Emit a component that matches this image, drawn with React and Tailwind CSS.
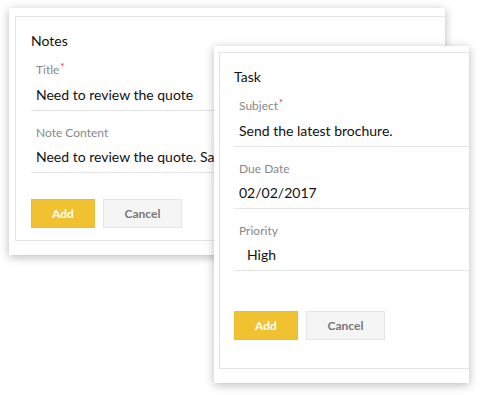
import React from "react";

function Field({ label, value, required, first, valueClass = "pl-[5px]" }) {
  return (
    <div
      className={`border-b border-[#e4e4e4] pb-[5px] ${first ? "mt-[11px]" : "mt-[14px]"}`}
    >
      <div className="pl-[5px] text-[12px] leading-[16px] text-[#888]">
        {label}
        {required && (
          <span className="relative -top-[4px] ml-[1px] text-[9px] text-[#e02020]">*</span>
        )}
      </div>
      <div
        className={`mt-[6px] overflow-hidden whitespace-nowrap text-[14px] leading-[20px] text-[#111] ${valueClass}`}
      >
        {value}
      </div>
    </div>
  );
}

function Buttons({ className }) {
  return (
    <div className={`flex gap-[8px] ${className}`}>
      <button className="h-[29px] w-[64px] border border-[#ecbd2a] bg-[#f0c232] text-[12px] font-bold text-white">
        Add
      </button>
      <button className="h-[29px] w-[79px] border border-[#e4e4e4] bg-[#f5f5f5] text-[12px] font-bold text-[#777]">
        Cancel
      </button>
    </div>
  );
}

function Card({ title, children, className, innerClass }) {
  return (
    <div
      className={`absolute bg-white shadow-[0_2px_9px_rgba(0,0,0,0.28)] ${className}`}
    >
      <div className={`h-full border-y border-l border-[#e4e4e4] ${innerClass}`}>
        <h2 className="pt-[14px] text-[14px] leading-[20px] text-[#111]">{title}</h2>
        {children}
      </div>
    </div>
  );
}

export default function App() {
  return (
    <div
      className="relative h-[395px] w-[482px] overflow-hidden bg-white"
      style={{ fontFamily: "Lato, 'Open Sans', sans-serif" }}
    >
      <Card
        title="Notes"
        className="left-[9px] top-[8px] z-0 h-[247px] w-[436px] pl-[6px] pt-[8px] pb-[14px]"
        innerClass="pl-[15px]"
      >
        <Field first label="Title" required value="Need to review the quote" />
        <Field
          label="Note Content"
          value="Need to review the quote. Sarah wants the revised pricing by Friday."
        />
        <Buttons className="mt-[26px]" />
      </Card>

      <Card
        title="Task"
        className="left-[214px] top-[46px] z-10 h-[337px] w-[255px] pl-[5px] pt-[6px] pb-[14px]"
        innerClass="pl-[14px]"
      >
        <Field first label="Subject" required value="Send the latest brochure." />
        <Field label="Due Date" value="02/02/2017" />
        <Field label="Priority" value="High" valueClass="pl-[13px]" />
        <Buttons className="mt-[40px]" />
      </Card>
    </div>
  );
}
